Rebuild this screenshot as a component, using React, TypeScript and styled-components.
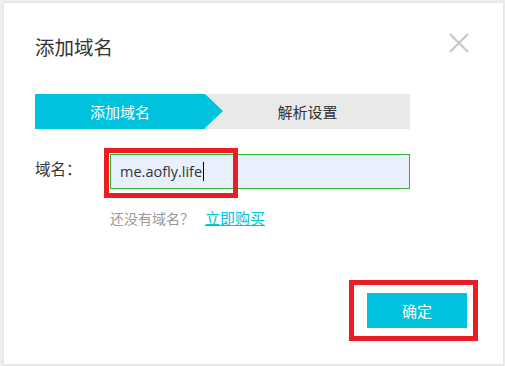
import { createGlobalStyle } from 'styled-components'
import styled from 'styled-components'

const COLORS = {
  cyan: '#00c1de',
  stepGrey: '#e9e9e9',
  text: '#333333',
  hint: '#999999',
  annotation: '#ec1c24',
  autofill: '#e8f0fe',
  focusBorder: '#2fb52f',
}

const GlobalStyle = createGlobalStyle`
  html, body {
    margin: 0;
    padding: 0;
    background: #eeeeee;
  }
  body {
    font-family: "Noto Sans CJK SC", "Noto Sans", "Liberation Sans", sans-serif;
  }
`

export default function App() {
  return (
    <>
      <GlobalStyle />
      <Backdrop>
        <Dialog>
          <Header>
            <Title>添加域名</Title>
            <CloseButton aria-label="关闭">
              <svg width="20" height="20" viewBox="0 0 20 20">
                <path d="M1 1 L19 19 M19 1 L1 19" stroke="#c4c4c4" strokeWidth="2" fill="none" />
              </svg>
            </CloseButton>
          </Header>

          <Steps>
            <Step $active>添加域名</Step>
            <Step>解析设置</Step>
          </Steps>

          <FormRow>
            <Label>域名：</Label>
            <InputWrap>
              <DomainInput>
                me.aofly.life<Caret />
              </DomainInput>
              <Annotation $top={-6} $left={-6} $width={134} $height={50} />
            </InputWrap>
          </FormRow>

          <Hint>
            还没有域名？<BuyLink href="#">立即购买</BuyLink>
          </Hint>

          <Footer>
            <ConfirmWrap>
              <ConfirmButton>确定</ConfirmButton>
              <Annotation $top={-13} $left={-18} $width={129} $height={61} />
            </ConfirmWrap>
          </Footer>
        </Dialog>
      </Backdrop>
    </>
  )
}

const Backdrop = styled.div`
  padding: 3px 2px 2px 4px;
  height: 366px;
  box-sizing: border-box;
  display: flex;
`

const Dialog = styled.div`
  flex: 1;
  background: #ffffff;
  box-shadow: 0 0 2px rgba(0, 0, 0, 0.12);
  display: flex;
  flex-direction: column;
  padding: 31px 36px 36px 31px;
  box-sizing: border-box;
`

const Header = styled.div`
  display: flex;
  justify-content: space-between;
  align-items: flex-start;
  height: 26px;
`

const Title = styled.h2`
  margin: 0;
  font-size: 19.5px;
  line-height: 26px;
  font-weight: 400;
  color: ${COLORS.text};
`

const CloseButton = styled.button`
  border: 0;
  padding: 0;
  background: none;
  width: 20px;
  height: 20px;
  margin: -1px -2px 0 0;
  display: flex;
`

const Steps = styled.div`
  margin-top: 34px;
  display: flex;
  width: 375px;
  height: 35px;
  background: ${COLORS.stepGrey};
`

const Step = styled.div<{ $active?: boolean }>`
  position: relative;
  flex: ${p => (p.$active ? '0 0 170px' : '1')};
  display: flex;
  align-items: center;
  justify-content: center;
  font-size: 15px;
  color: ${p => (p.$active ? '#ffffff' : COLORS.text)};
  background: ${p => (p.$active ? COLORS.cyan : 'transparent')};

  ${p =>
    p.$active &&
    `
    &::after {
      content: '';
      position: absolute;
      right: -18px;
      top: 0;
      border-top: 17.5px solid transparent;
      border-bottom: 17.5px solid transparent;
      border-left: 18px solid ${COLORS.cyan};
    }
  `}
`

const FormRow = styled.div`
  margin-top: 25px;
  display: flex;
  align-items: center;
`

const Label = styled.div`
  width: 75px;
  font-size: 15.5px;
  color: ${COLORS.text};
  margin-top: -7px;
`

const InputWrap = styled.div`
  position: relative;
`

const DomainInput = styled.div`
  width: 300px;
  height: 35px;
  box-sizing: border-box;
  border: 1px solid ${COLORS.focusBorder};
  background: ${COLORS.autofill};
  padding: 0 9px;
  display: flex;
  align-items: center;
  font-family: "Open Sans", "Liberation Sans", sans-serif;
  font-size: 14.5px;
  color: ${COLORS.text};
`

const Caret = styled.span`
  display: inline-block;
  width: 1px;
  height: 19px;
  background: #000;
  margin-left: 1px;
`

const Annotation = styled.div<{ $top: number; $left: number; $width: number; $height: number }>`
  position: absolute;
  top: ${p => p.$top}px;
  left: ${p => p.$left}px;
  width: ${p => p.$width}px;
  height: ${p => p.$height}px;
  border: 5px solid ${COLORS.annotation};
  box-sizing: border-box;
  pointer-events: none;
`

const Hint = styled.div`
  margin: 19px 0 0 75px;
  font-size: 14px;
  line-height: 20px;
  color: ${COLORS.hint};
`

const BuyLink = styled.a`
  color: ${COLORS.cyan};
  text-decoration: underline;
  font-size: 15px;
  margin-left: 11px;
`

const Footer = styled.div`
  margin-top: auto;
  display: flex;
  justify-content: flex-end;
`

const ConfirmWrap = styled.div`
  position: relative;
`

const ConfirmButton = styled.button`
  width: 100px;
  height: 35px;
  border: 0;
  background: ${COLORS.cyan};
  color: #ffffff;
  font-family: "Noto Sans CJK SC", sans-serif;
  font-size: 15px;
  display: block;
`
